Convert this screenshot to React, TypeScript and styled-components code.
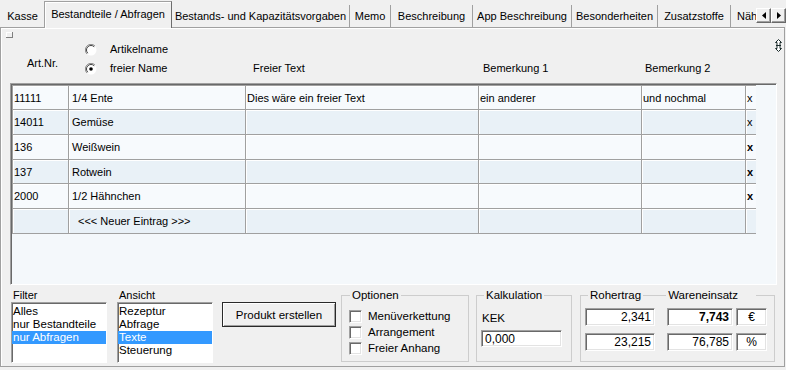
import React from 'react';
import styled, { createGlobalStyle, css } from 'styled-components';

const GlobalStyle = createGlobalStyle`
  html, body {
    margin: 0;
    padding: 0;
  }
  body {
    background: #f0f0f0;
    font-family: "Liberation Sans", Arial, sans-serif;
    font-size: 11px;
    color: #000;
  }
  * {
    box-sizing: border-box;
  }
`;

const Window = styled.div`
  width: 786px;
  height: 370px;
  overflow: hidden;
  background: #f0f0f0;
`;

const TabStrip = styled.div`
  position: relative;
  display: flex;
  align-items: flex-end;
  height: 27px;
  padding-left: 2px;
  z-index: 1;
`;

const Tab = styled.div<{ $w: number; $active?: boolean; $noSep?: boolean; $left?: boolean }>`
  flex: none;
  width: ${p => p.$w}px;
  height: 22px;
  display: flex;
  align-items: center;
  justify-content: ${p => (p.$left ? 'flex-start' : 'center')};
  padding-left: ${p => (p.$left ? 6 : 0)}px;
  white-space: nowrap;
  overflow: hidden;
  border-right: 1px solid ${p => (p.$noSep ? 'transparent' : '#a0a0a0')};
  ${p =>
    p.$active &&
    css`
      height: 27px;
      margin-bottom: -1px;
      padding-bottom: 3px;
      background: #f0f0f0;
      border: 1px solid #a0a0a0;
      border-right: 1px solid #6d6d6d;
      border-bottom: none;
      box-shadow: inset 1px 1px 0 #fff;
    `}
`;

const TabScroll = styled.div`
  position: absolute;
  right: 0;
  top: 8px;
  display: flex;
  background: #f0f0f0;
`;

const ScrollButton = styled.div`
  width: 15px;
  height: 15px;
  display: flex;
  align-items: center;
  justify-content: center;
  background: #f0f0f0;
  border: 1px solid;
  border-color: #fff #696969 #696969 #fff;
  box-shadow: inset -1px -1px 0 #a0a0a0;
`;

const Panel = styled.div`
  width: 785px;
  height: 340px;
  border: 1px solid #a0a0a0;
  box-shadow: inset 1px 1px 0 #fff;
`;

const Header = styled.div`
  display: grid;
  grid-template-columns: 12px 56px 177px 233px 163px 104px 1fr;
  height: 55px;
`;

const HeadCell = styled.div<{ $pb: number; $pl: number }>`
  display: flex;
  flex-direction: column;
  justify-content: flex-end;
  padding: 0 0 ${p => p.$pb}px ${p => p.$pl}px;
  line-height: 13px;
  white-space: nowrap;
`;

const CornerCell = styled.div`
  padding: 4px 0 0 5px;
`;

const CornerMark = styled.div`
  width: 7px;
  height: 6px;
  border-right: 1px solid #808080;
  border-bottom: 1px solid #808080;
  box-shadow: inset 1px 1px 0 #fff;
`;

const SizerCell = styled.div`
  display: flex;
  justify-content: flex-end;
  padding: 11px 2px 0 0;
`;

const RadioRow = styled.label`
  display: flex;
  align-items: center;
  height: 19px;
  padding-left: 16px;
  gap: 13px;
`;

const GridBox = styled.div`
  margin-left: 9px;
  width: 767px;
  height: 202px;
  padding-left: 1px;
  background: #f4f8fb;
  border: 1px solid;
  border-color: #a0a0a0 #fff #fff #a0a0a0;
  box-shadow: inset 1px 1px 0 #696969;
`;

const Table = styled.div`
  width: 744px;
  margin-top: 1px;
  border-top: 1px solid #a0a0a0;
`;

const Row = styled.div<{ $h: number; $even: boolean }>`
  display: grid;
  grid-template-columns: 56px 177px 233px 163px 104px 11px;
  height: ${p => p.$h}px;
  background: ${p => (p.$even ? '#e9f1f7' : '#f7fafd')};
`;

const Cell = styled.div<{ $pad: number; $bold?: boolean }>`
  display: flex;
  align-items: center;
  padding-left: ${p => p.$pad}px;
  border-left: 1px solid #a0a0a0;
  border-bottom: 1px solid #a0a0a0;
  box-shadow: inset 1px 1px 0 #fff;
  font-weight: ${p => (p.$bold ? 700 : 400)};
  white-space: nowrap;
  overflow: hidden;
`;

const Bottom = styled.div`
  display: flex;
  align-items: flex-start;
  height: 81px;
  padding: 4px 0 0 10px;
`;

const Column = styled.div<{ $ml: number }>`
  width: 96px;
  margin-left: ${p => p.$ml}px;
`;

const Caption = styled.div`
  line-height: 13px;
  padding-left: 2px;
`;

const ListBox = styled.div`
  height: 61px;
  padding-top: 2px;
  background: #fff;
  border: 1px solid;
  border-color: #a0a0a0 #fff #fff #a0a0a0;
  box-shadow: inset 1px 1px 0 #696969, 0 0 0 0 transparent;
  font-size: 11.5px;
`;

const ListItem = styled.div<{ $selected?: boolean }>`
  height: 13px;
  line-height: 13px;
  padding-left: 1px;
  white-space: nowrap;
  background: ${p => (p.$selected ? '#3399ff' : 'transparent')};
  color: ${p => (p.$selected ? '#fff' : '#000')};
`;

const Button = styled.button`
  margin: 13px 0 0 9px;
  width: 114px;
  height: 25px;
  padding: 0;
  font: inherit;
  font-size: 11.5px;
  color: #000;
  background: #f0f0f0;
  border: 1px solid #2a2a2a;
  box-shadow: inset 1px 1px 0 #fff, inset -1px -1px 0 #a0a0a0;
`;

const Group = styled.fieldset<{ $w: number; $ml: number; $pl: number }>`
  margin: 0 0 0 ${p => p.$ml}px;
  width: ${p => p.$w}px;
  min-width: 0;
  height: 73px;
  padding: 0 0 0 ${p => p.$pl}px;
  border: 1px solid #cdcdcd;
`;

const Legend = styled.legend<{ $ml: number }>`
  display: flex;
  align-items: center;
  margin-left: ${p => p.$ml}px;
  padding: 0 2px;
  line-height: 13px;
  font-size: 11.5px;
`;

const LegendRule = styled.span`
  width: 23px;
  height: 1px;
  margin: 0 2px;
  background: #cdcdcd;
`;

const LegendTail = styled.span`
  padding: 0 16px 0 0;
`;

const CheckList = styled.div`
  padding-top: 6px;
`;

const CheckRow = styled.label`
  display: flex;
  align-items: center;
  height: 16px;
  gap: 6px;
  font-size: 11.5px;
`;

const CheckBox = styled.span`
  width: 13px;
  height: 13px;
  background: #fff;
  border: 1px solid;
  border-color: #a0a0a0 #fff #fff #a0a0a0;
  box-shadow: inset 1px 1px 0 #696969, inset -1px -1px 0 #e3e3e3;
`;

const KekLabel = styled.div`
  margin-top: 10px;
  line-height: 13px;
  padding-left: 1px;
  font-size: 11.5px;
`;

const Field = styled.div<{ $w: number; $h?: number; $ml?: number; $align?: string; $bold?: boolean }>`
  width: ${p => p.$w}px;
  height: ${p => p.$h ?? 18}px;
  margin-left: ${p => p.$ml ?? 0}px;
  display: flex;
  align-items: center;
  justify-content: ${p => p.$align ?? 'flex-end'};
  padding: 0 3px;
  background: #fff;
  border: 1px solid;
  border-color: #a0a0a0 #fff #fff #a0a0a0;
  box-shadow: inset 1px 1px 0 #696969, inset -1px -1px 0 #e3e3e3;
  font-size: 12px;
  font-weight: ${p => (p.$bold ? 700 : 400)};
  white-space: nowrap;
`;

const FieldRows = styled.div`
  display: flex;
  flex-direction: column;
  gap: 7px;
  padding-top: 6px;
`;

const FieldRow = styled.div`
  display: flex;
`;

const Radio = ({ checked }: { checked?: boolean }) => (
  <svg width="12" height="12" viewBox="0 0 12 12">
    <circle cx="6" cy="6" r="5.5" fill="#fff" />
    <path d="M10 2 A5.5 5.5 0 0 0 2 10" stroke="#8a8a8a" fill="none" />
    <path d="M9.2 2.8 A4.5 4.5 0 0 0 2.8 9.2" stroke="#404040" fill="none" />
    {checked && <circle cx="6" cy="6" r="1.8" fill="#000" />}
  </svg>
);

const Triangle = ({ dir }: { dir: 'left' | 'right' }) => (
  <svg width="4" height="7" viewBox="0 0 4 7">
    <path d={dir === 'left' ? 'M4 0 L0 3.5 L4 7 Z' : 'M0 0 L4 3.5 L0 7 Z'} fill="#000" />
  </svg>
);

const SizerIcon = () => (
  <svg width="7" height="13" viewBox="0 0 7 13">
    <path
      d="M3.5 0.5 L6.5 3.5 L5 3.5 L5 9.5 L6.5 9.5 L3.5 12.5 L0.5 9.5 L2 9.5 L2 3.5 L0.5 3.5 Z"
      fill="#fff"
      stroke="#1a2a2a"
    />
    <path d="M1 6.5 H6" stroke="#1a2a2a" />
  </svg>
);

const tabs = [
  { label: 'Kasse', w: 42, noSep: true },
  { label: 'Bestandteile / Abfragen', w: 128, active: true },
  { label: 'Bestands- und Kapazitätsvorgaben', w: 178 },
  { label: 'Memo', w: 41 },
  { label: 'Beschreibung', w: 82 },
  { label: 'App Beschreibung', w: 99 },
  { label: 'Besonderheiten', w: 86 },
  { label: 'Zusatzstoffe', w: 73 },
  { label: 'Nährwerte', w: 80, left: true },
];

type Entry = { nr: string; name: string; text: string; b1: string; b2: string; x: string; bold?: boolean; isNew?: boolean };

const rows: Entry[] = [
  { nr: '11111', name: '1/4 Ente', text: 'Dies wäre ein freier Text', b1: 'ein anderer', b2: 'und nochmal', x: 'x' },
  { nr: '14011', name: 'Gemüse', text: '', b1: '', b2: '', x: 'x' },
  { nr: '136', name: 'Weißwein', text: '', b1: '', b2: '', x: 'x', bold: true },
  { nr: '137', name: 'Rotwein', text: '', b1: '', b2: '', x: 'x', bold: true },
  { nr: '2000', name: '1/2 Hähnchen', text: '', b1: '', b2: '', x: 'x', bold: true },
  { nr: '', name: '<<< Neuer Eintrag >>>', text: '', b1: '', b2: '', x: '', isNew: true },
];

const rowHeights = [24, 25, 25, 24, 25, 25];

const App = () => {
  return (
    <Window>
      <GlobalStyle />
      <TabStrip>
        {tabs.map(t => (
          <Tab key={t.label} $w={t.w} $active={t.active} $noSep={t.noSep} $left={t.left}>
            {t.label}
          </Tab>
        ))}
        <TabScroll>
          <ScrollButton><Triangle dir="left" /></ScrollButton>
          <ScrollButton><Triangle dir="right" /></ScrollButton>
        </TabScroll>
      </TabStrip>

      <Panel>
        <Header>
          <CornerCell><CornerMark /></CornerCell>
          <HeadCell $pb={13} $pl={14}>Art.Nr.</HeadCell>
          <HeadCell $pb={5} $pl={0}>
            <RadioRow><Radio /> Artikelname</RadioRow>
            <RadioRow><Radio checked /> freier Name</RadioRow>
          </HeadCell>
          <HeadCell $pb={8} $pl={7}>Freier Text</HeadCell>
          <HeadCell $pb={8} $pl={4}>Bemerkung 1</HeadCell>
          <HeadCell $pb={8} $pl={3}>Bemerkung 2</HeadCell>
          <SizerCell><SizerIcon /></SizerCell>
        </Header>

        <GridBox>
          <Table>
            {rows.map((r, i) => (
              <Row key={i} $h={rowHeights[i]} $even={i % 2 === 1}>
                <Cell $pad={1}>{r.nr}</Cell>
                <Cell $pad={r.isNew ? 9 : 3}>{r.name}</Cell>
                <Cell $pad={1}>{r.text}</Cell>
                <Cell $pad={1}>{r.b1}</Cell>
                <Cell $pad={1}>{r.b2}</Cell>
                <Cell $pad={1} $bold={r.bold}>{r.x}</Cell>
              </Row>
            ))}
          </Table>
        </GridBox>

        <Bottom>
          <Column $ml={0}>
            <Caption>Filter</Caption>
            <ListBox>
              <ListItem>Alles</ListItem>
              <ListItem>nur Bestandteile</ListItem>
              <ListItem $selected>nur Abfragen</ListItem>
            </ListBox>
          </Column>
          <Column $ml={10}>
            <Caption>Ansicht</Caption>
            <ListBox>
              <ListItem>Rezeptur</ListItem>
              <ListItem>Abfrage</ListItem>
              <ListItem $selected>Texte</ListItem>
              <ListItem>Steuerung</ListItem>
            </ListBox>
          </Column>
          <Button>Produkt erstellen</Button>

          <Group $w={128} $ml={5} $pl={7}>
            <Legend $ml={1}>Optionen</Legend>
            <CheckList>
              <CheckRow><CheckBox />Menüverkettung</CheckRow>
              <CheckRow><CheckBox />Arrangement</CheckRow>
              <CheckRow><CheckBox />Freier Anhang</CheckRow>
            </CheckList>
          </Group>

          <Group $w={96} $ml={7} $pl={4}>
            <Legend $ml={3}>Kalkulation</Legend>
            <KekLabel>KEK</KekLabel>
            <Field $w={81} $h={17} $align="flex-start" style={{ marginTop: 5 }}>0,000</Field>
          </Group>

          <Group $w={195} $ml={8} $pl={4}>
            <Legend $ml={3}>
              Rohertrag
              <LegendRule />
              <LegendTail>Wareneinsatz</LegendTail>
            </Legend>
            <FieldRows>
              <FieldRow>
                <Field $w={70}>2,341</Field>
                <Field $w={66} $ml={12} $bold>7,743</Field>
                <Field $w={31} $ml={3} $align="center">€</Field>
              </FieldRow>
              <FieldRow>
                <Field $w={70}>23,215</Field>
                <Field $w={66} $ml={12}>76,785</Field>
                <Field $w={31} $ml={3} $align="center">%</Field>
              </FieldRow>
            </FieldRows>
          </Group>
        </Bottom>
      </Panel>
    </Window>
  );
};

export default App;
